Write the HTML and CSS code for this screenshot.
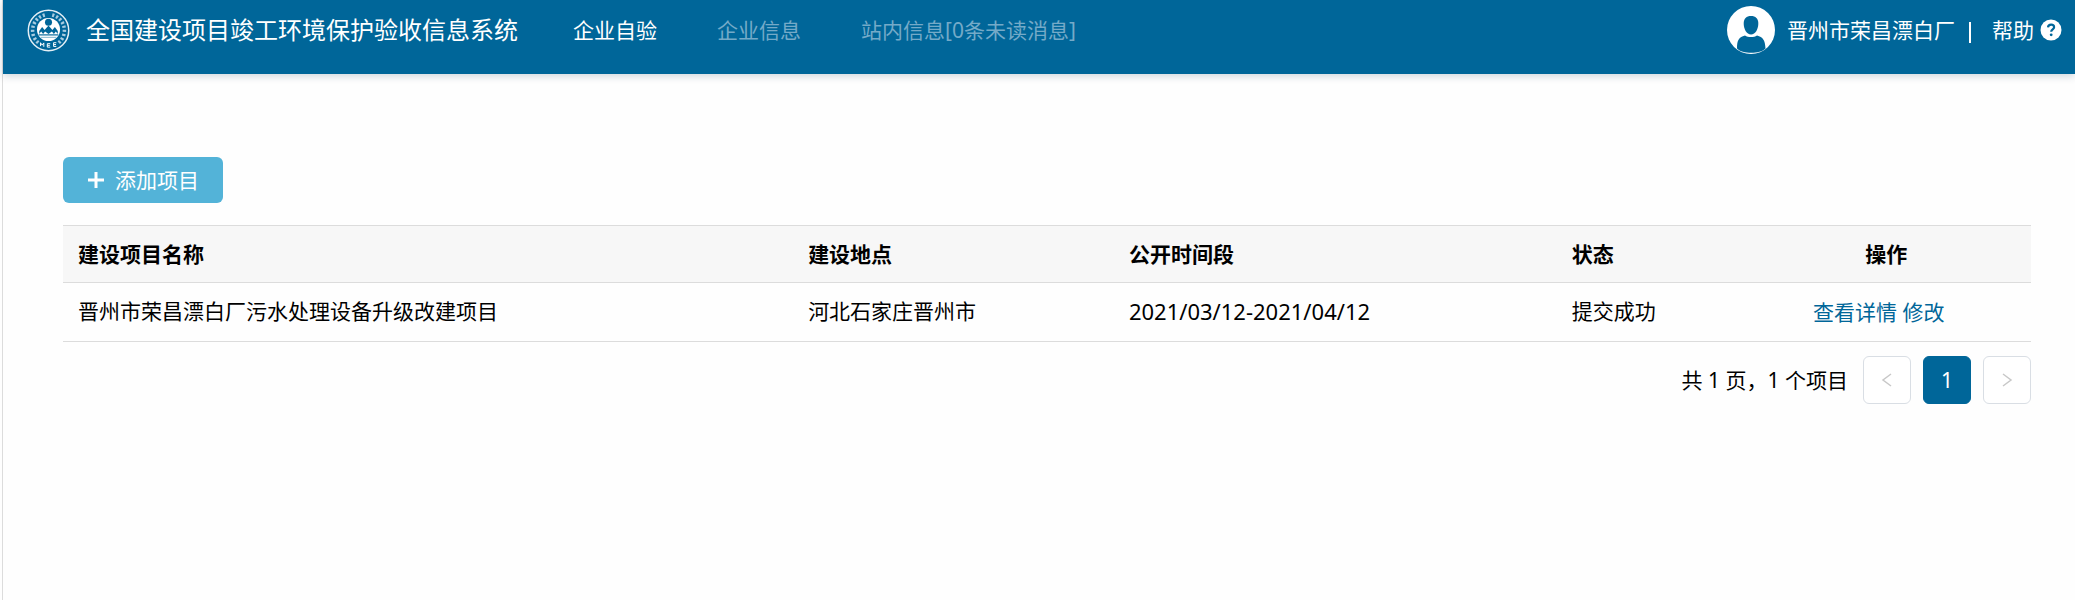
FILE: index.html
```html
<!DOCTYPE html>
<html lang="zh-CN">
<head>
<meta charset="utf-8">
<title>全国建设项目竣工环境保护验收信息系统</title>
<link rel="stylesheet" href="styles.css">
</head>
<body>
<div class="page">
  <header class="topbar">
    <svg class="logo" viewBox="0 0 44 44" aria-hidden="true">
      <circle cx="22" cy="22" r="20.7" fill="none" stroke="#e4eff5" stroke-width="1.500"/>
      <path d="M11.500 34.500A16.400 16.400 0 0 1 19 5.900M32.500 34.500A16.400 16.400 0 0 0 25 5.900" fill="none" stroke="#a9cce0" stroke-width="3.600" stroke-dasharray="2.200 2"/>
      <circle cx="22" cy="21" r="11.800" fill="#fff"/>
      <circle cx="22" cy="13.500" r="3.600" fill="#006699"/>
      <path d="M12.500 25.500V22.500L15.500 18.500L18 21.500L22 17L26 21.500L28.500 18.500L31.500 22.500V25.500L29.500 23L27.500 25.500L25.500 23L22 25.500L18.500 23L16.500 25.500L14.500 23Z" fill="#006699"/>
      <path d="M12 26.500H32" stroke="#006699" stroke-width="1.200" fill="none"/>
      <path d="M14 29H30" stroke="#80b3cc" stroke-width="1" fill="none"/>
      <path d="M13.800 38V34.500L15.500 37L17.200 34.700V38.700M23.800 35.500H20.800V39H23.800M20.800 37.200H23.400M30 34.500H27.200V38.300H30M27.200 36.400H29.700" fill="none" stroke="#fff" stroke-width="1"/>
    </svg>
    <h1 class="brand">全国建设项目竣工环境保护验收信息系统</h1>
    <nav class="menu">
      <a class="menu-link active" href="#">企业自验</a>
      <a class="menu-link" href="#">企业信息</a>
      <a class="menu-link" href="#">站内信息[0条未读消息]</a>
    </nav>
    <div class="account">
      <svg class="avatar" viewBox="0 0 48 48" aria-hidden="true">
        <circle cx="24" cy="24" r="24" fill="#fff"/>
        <path d="M24 10C28.500 10 31.500 12.500 31.300 18C31.100 23 28.500 28.500 24 28.500S16.900 23 16.700 18C16.500 12.500 19.500 10 24 10Z" fill="#006699"/>
        <path d="M10 42.500C10 34 12 31 18 29.500C21 31.500 27 31.500 30 29.500C36 31 38 34 38.500 42.500C33 48.300 15.500 48.300 10 42.500Z" fill="#006699"/>
      </svg>
      <span class="company">晋州市荣昌漂白厂</span>
      <span class="divider"></span>
      <a class="help" href="#">帮助
        <svg class="help-icon" viewBox="0 0 22 22" aria-hidden="true">
          <circle cx="11" cy="11" r="10.500" fill="#fff"/>
          <path d="M8 8.400C8.200 6.500 9.400 5.700 11.100 5.700C12.900 5.700 14.100 6.700 14.100 8.200C14.100 10.400 11.200 10.300 11.200 12.800" fill="none" stroke="#006699" stroke-width="2.200"/>
          <circle cx="11.200" cy="15.800" r="1.400" fill="#006699"/>
        </svg>
      </a>
    </div>
  </header>
  <main class="content">
    <button class="add" type="button">
      <svg class="plus" viewBox="0 0 18 18" aria-hidden="true"><path d="M9 1V17M1 9H17" stroke="#fff" stroke-width="3"/></svg>
      添加项目
    </button>
    <table class="projects">
      <colgroup><col class="c-name"><col class="c-place"><col class="c-time"><col class="c-state"><col class="c-ops"></colgroup>
      <thead>
        <tr><th>建设项目名称</th><th>建设地点</th><th>公开时间段</th><th>状态</th><th class="ops">操作</th></tr>
      </thead>
      <tbody>
        <tr><td>晋州市荣昌漂白厂污水处理设备升级改建项目</td><td>河北石家庄晋州市</td><td class="date">2021/03/12-2021/04/12</td><td>提交成功</td><td class="ops"><a href="#">查看详情</a> <a href="#">修改</a></td></tr>
      </tbody>
    </table>
    <div class="pager">
      <span class="summary">共 1 页，1 个项目</span>
      <button class="page-btn" type="button" aria-label="上一页" disabled><svg class="chevron" viewBox="0 0 16 16"><path d="M12 2L4 8L12 14"/></svg></button>
      <button class="page-btn current" type="button">1</button>
      <button class="page-btn" type="button" aria-label="下一页" disabled><svg class="chevron" viewBox="0 0 16 16"><path d="M4 2L12 8L4 14"/></svg></button>
    </div>
  </main>
</div>
</body>
</html>
```
FILE: styles.css
```css
* { box-sizing: border-box; }
body {
  margin: 0;
  background: #fefefe;
  color: #000;
  font: 21px/28px "Noto Sans", "Noto Sans CJK SC", sans-serif;
}
a { color: #006699; text-decoration: none; }
button { font: inherit; cursor: pointer; }
.page { min-height: 100vh; margin-left: 2px; border-left: 1px solid #dcdcdc; }
.topbar {
  display: flex;
  align-items: center;
  height: 74px;
  padding: 0 13px 14px 24px;
  background: #006699;
  color: #fff;
  box-shadow: 0 2px 8px rgba(0, 50, 80, 0.2);
  white-space: nowrap;
}
.logo { width: 43px; height: 43px; margin-right: 16px; }
.brand { margin: 0; font-size: 24px; font-weight: 400; }
.menu { display: flex; gap: 60px; margin-left: 55px; }
.menu-link { color: #74aac8; }
.menu-link.active { color: #fff; }
.account { display: flex; align-items: center; margin-left: auto; }
.avatar { width: 48px; height: 48px; margin-right: 12px; }
.divider { width: 2px; height: 21px; margin: 4px 21px 0 14px; background: #fff; }
.help { display: flex; align-items: center; gap: 6px; color: #fff; }
.help-icon { width: 22px; height: 22px; }
.content { padding: 83px 44px 40px 60px; }
.add {
  display: flex;
  align-items: center;
  justify-content: center;
  gap: 10px;
  width: 160px;
  height: 46px;
  padding: 0;
  border: 0;
  border-radius: 6px;
  background: #53b3d8;
  color: #fff;
}
.plus { width: 18px; height: 18px; }
.projects {
  width: 100%;
  margin-top: 22px;
  border-collapse: collapse;
  table-layout: fixed;
}
.c-name { width: 37.1%; }
.c-place { width: 16.3%; }
.c-time { width: 22.5%; }
.c-state { width: 9.4%; }
.c-ops { width: 14.7%; }
.projects th, .projects td {
  padding: 14px 15px;
  border-top: 1px solid #dcdcdc;
  border-bottom: 1px solid #dcdcdc;
  text-align: left;
}
.projects th { background: #f7f7f7; font-weight: 700; }
.projects td { padding-bottom: 16px; }
.projects .date { font-size: 22px; }
.projects .ops { text-align: center; }
.projects td.ops { padding: 15px 30px 15px 15px; }
.pager { display: flex; align-items: center; justify-content: flex-end; gap: 12px; margin-top: 14px; }
.summary { margin-right: 3px; }
.page-btn {
  display: flex;
  align-items: center;
  justify-content: center;
  width: 48px;
  height: 48px;
  padding: 0;
  border: 1px solid #d9dee4;
  border-radius: 6px;
  background: #fff;
}
.page-btn.current { border-color: #006699; background: #006699; color: #fff; }
.chevron { width: 16px; height: 16px; fill: none; stroke: #c8c8c8; stroke-width: 1.5; }
```
